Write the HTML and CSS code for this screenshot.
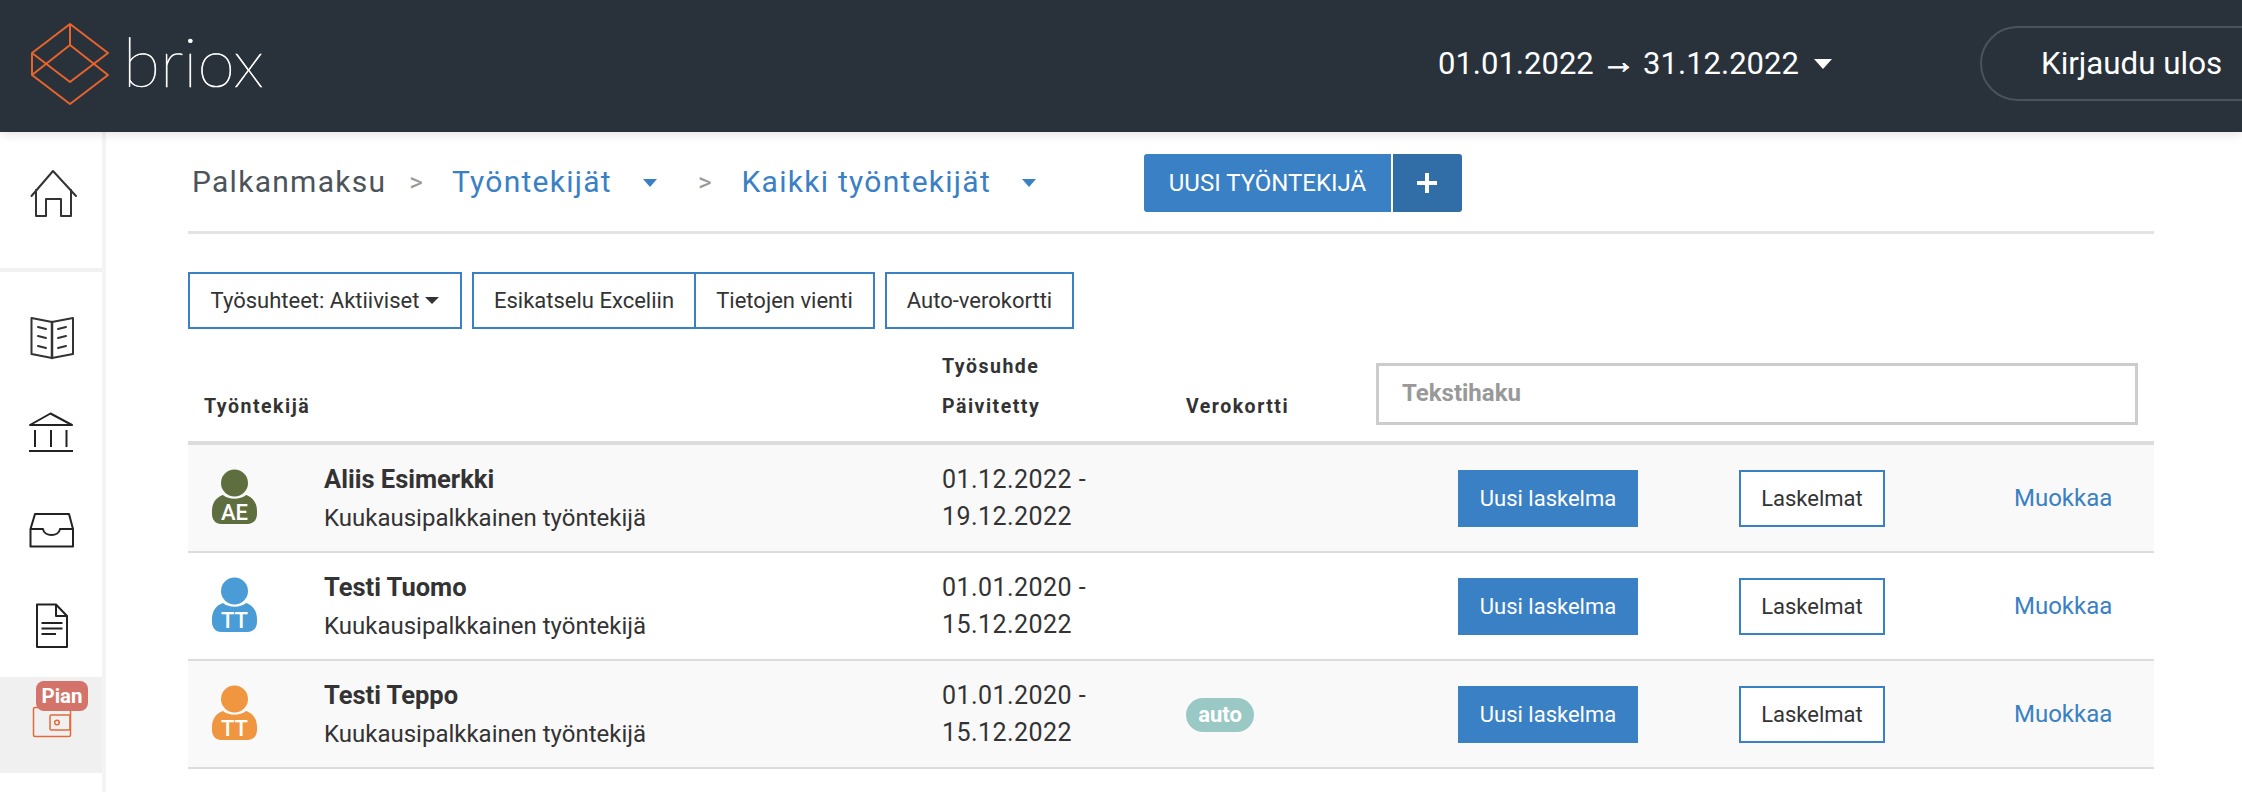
FILE: index.html
```html
<!DOCTYPE html>
<html lang="fi">
<head>
<meta charset="utf-8">
<title>Briox – Työntekijät</title>
<link rel="stylesheet" href="styles.css">
</head>
<body>
<header class="topbar">
  <a class="logo">
    <svg class="logo-mark" viewBox="0 0 130 132" width="130" height="132" fill="none" stroke="#e8642c" stroke-width="2" stroke-linejoin="round">
      <path d="M70 24L108 53L70 82L32 53Z"/>
      <path d="M70 24V45L108 75L70 104L32 75V53"/>
      <path d="M70 45L32 75"/>
    </svg>
    <span class="logo-text">briox</span>
  </a>
  <div class="period">01.01.2022 <span class="arrow">→</span> 31.12.2022<span class="caret caret-white"></span></div>
  <a class="logout">Kirjaudu ulos</a>
</header>
<div class="layout">
  <nav class="sidebar">
    <div class="side-home">
      <svg viewBox="0 132 102 136" width="102" height="136" fill="none" stroke="#333" stroke-width="2" stroke-linejoin="round" stroke-linecap="round">
        <path d="M31.500 196L53 171L76 196"/>
        <path d="M36 190V216H46V199H61V216H71V190"/>
      </svg>
    </div>
    <div class="side-list">
      <div class="side-item">
        <svg viewBox="0 290 102 96" width="102" height="96" fill="none" stroke="#333" stroke-width="2" stroke-linejoin="round" stroke-linecap="round">
          <path d="M31.500 318L52 322L73 318V354L52 358L31.500 354Z"/>
          <path d="M52 322V358" stroke-width="2.500"/>
          <path d="M38 327L46 329M38 336L46 338M38 346L46 348M58 329L66 327M58 338L66 336M58 348L66 346"/>
        </svg>
      </div>
      <div class="side-item">
        <svg viewBox="0 386 102 96" width="102" height="96" fill="none" stroke="#222" stroke-width="2" stroke-linejoin="round">
          <path d="M30 425L50.500 413.500L72 425Z"/>
          <path d="M35 430V447M51 430V447M66.500 430V447"/>
          <path d="M29 451H73"/>
        </svg>
      </div>
      <div class="side-item">
        <svg viewBox="0 482 102 96" width="102" height="96" fill="none" stroke="#222" stroke-width="2" stroke-linejoin="round">
          <path d="M30.500 529L35 514H69L73 529V546.500H30.500Z"/>
          <path d="M30.500 529H43C44 537 59 537 60 529H73"/>
        </svg>
      </div>
      <div class="side-item">
        <svg viewBox="0 578 102 96" width="102" height="96" fill="none" stroke="#222" stroke-width="2" stroke-linejoin="round">
          <path d="M37 604.500H56L67 616V647H37Z"/>
          <path d="M56 604.500V616H67"/>
          <path d="M41.500 623H62.500M41.500 628.500H62.500M41.500 634H56"/>
        </svg>
      </div>
    </div>
    <div class="side-soon">
      <svg viewBox="0 677 102 96" width="102" height="96" fill="none" stroke="#e2693a" stroke-width="1.500" stroke-linejoin="round">
        <rect x="33.500" y="707.500" width="37" height="29" rx="1.500"/>
        <rect x="50" y="715" width="20" height="15" rx="1"/>
        <circle cx="57" cy="722.500" r="2.300"/>
      </svg>
      <span class="soon-badge">Pian</span>
    </div>
  </nav>
  <main class="main">
    <div class="crumbs">
      <span class="crumb crumb-root">Palkanmaksu</span>
      <span class="crumb-sep sep-1">&gt;</span>
      <a class="crumb crumb-link">Työntekijät</a>
      <span class="caret caret-blue caret-1"></span>
      <span class="crumb-sep sep-2">&gt;</span>
      <a class="crumb crumb-link">Kaikki työntekijät</a>
      <span class="caret caret-blue caret-2"></span>
      <div class="new-group">
        <a class="new-main">UUSI TYÖNTEKIJÄ</a>
        <a class="new-plus">
          <svg viewBox="0 0 20 20" width="20" height="20" fill="#fff"><path d="M8 0H12V8H20V12H12V20H8V12H0V8H8Z"/></svg>
        </a>
      </div>
    </div>
    <div class="toolbar">
      <a class="tool tool-filter">Työsuhteet: Aktiiviset<span class="caret caret-dark"></span></a>
      <div class="tool-group">
        <a class="tool tool-excel">Esikatselu Exceliin</a>
        <a class="tool tool-export">Tietojen vienti</a>
      </div>
      <a class="tool tool-auto">Auto-verokortti</a>
    </div>
    <div class="table-head">
      <div class="th">Työntekijä</div>
      <div class="th">Työsuhde<br>Päivitetty</div>
      <div class="th">Verokortti</div>
      <input class="search" type="text" placeholder="Tekstihaku">
    </div>
    <div class="rows">
      <div class="row row-odd">
        <svg class="avatar avatar-olive" viewBox="0 0 45 58" width="45" height="58">
          <circle cx="22.500" cy="14" r="13.500"/>
          <path d="M0 42C0 33 5 28 11 26C17 31 28 31 34 26C40 28 45 33 45 42V45C45 51 41 55 36 55H9C4 55 0 51 0 45Z"/>
          <text x="22.500" y="51" text-anchor="middle">AE</text>
        </svg>
        <div class="person"><div class="name">Aliis Esimerkki</div><div class="role">Kuukausipalkkainen työntekijä</div></div>
        <div class="dates">01.12.2022 -<br>19.12.2022</div>
        <div class="tax"></div>
        <a class="calc-new">Uusi laskelma</a>
        <a class="calc-list">Laskelmat</a>
        <a class="edit">Muokkaa</a>
      </div>
      <div class="row">
        <svg class="avatar avatar-blue" viewBox="0 0 45 58" width="45" height="58">
          <circle cx="22.500" cy="14" r="13.500"/>
          <path d="M0 42C0 33 5 28 11 26C17 31 28 31 34 26C40 28 45 33 45 42V45C45 51 41 55 36 55H9C4 55 0 51 0 45Z"/>
          <text x="22.500" y="51" text-anchor="middle">TT</text>
        </svg>
        <div class="person"><div class="name">Testi Tuomo</div><div class="role">Kuukausipalkkainen työntekijä</div></div>
        <div class="dates">01.01.2020 -<br>15.12.2022</div>
        <div class="tax"></div>
        <a class="calc-new">Uusi laskelma</a>
        <a class="calc-list">Laskelmat</a>
        <a class="edit">Muokkaa</a>
      </div>
      <div class="row row-odd">
        <svg class="avatar avatar-orange" viewBox="0 0 45 58" width="45" height="58">
          <circle cx="22.500" cy="14" r="13.500"/>
          <path d="M0 42C0 33 5 28 11 26C17 31 28 31 34 26C40 28 45 33 45 42V45C45 51 41 55 36 55H9C4 55 0 51 0 45Z"/>
          <text x="22.500" y="51" text-anchor="middle">TT</text>
        </svg>
        <div class="person"><div class="name">Testi Teppo</div><div class="role">Kuukausipalkkainen työntekijä</div></div>
        <div class="dates">01.01.2020 -<br>15.12.2022</div>
        <div class="tax"><span class="auto-badge">auto</span></div>
        <a class="calc-new">Uusi laskelma</a>
        <a class="calc-list">Laskelmat</a>
        <a class="edit">Muokkaa</a>
      </div>
    </div>
  </main>
</div>
</body>
</html>
```
FILE: styles.css
```css
* { box-sizing: border-box; }
html, body { margin: 0; height: 100%; overflow: hidden; }
body { font-family: Roboto, "Liberation Sans", sans-serif; color: #333; background: #fff; width: 2242px; height: 792px; }
svg { display: block; }

.topbar { height: 132px; background: #29323a; display: flex; align-items: center; position: relative; z-index: 2; box-shadow: 0 2px 10px rgba(0,0,0,.12); overflow: hidden; }
.logo { display: flex; align-items: center; width: 1438px; flex: none; }
.logo-mark { margin-right: -4px; flex: none; }
.logo-text { font-family: Lato, sans-serif; font-weight: 100; font-size: 68px; line-height: 122px; color: #fff; -webkit-text-stroke: .7px #fff; letter-spacing: 0; margin: 0 0 10px -3px; }
.period { flex: none; width: 542px; color: #fff; font-size: 31px; display: flex; align-items: center; white-space: pre; margin-bottom: 5px; }
.arrow { font-weight: 700; font-size: 34px; line-height: 36px; margin-bottom: 6px; -webkit-text-stroke: .8px #fff; }
.caret { display: inline-block; width: 0; height: 0; border-style: solid; border-color: transparent; border-bottom-width: 0; }
.caret-white { border-width: 10px 9.500px 0; border-top-color: #fff; margin-left: 15px; }
.logout { flex: none; width: 400px; height: 75px; border: 2px solid #4b535a; border-radius: 38px; color: #fff; font-size: 31.300px; line-height: 71px; padding-left: 59px; white-space: nowrap; margin-bottom: 5px; }

.layout { display: flex; height: 660px; }
.sidebar { width: 102px; flex: none; background: #fff; }
.side-home { height: 136px; }
.side-list { margin-top: 4px; padding-top: 18px; box-shadow: 0 -4px 0 #f1f1f1; height: 405px; }
.side-item { height: 96px; }
.side-soon { height: 96px; background: #f0f0f0; position: relative; }
.soon-badge { position: absolute; left: 36px; top: 4px; width: 52px; height: 30px; background: #d4736a; border-radius: 8px; color: #fff; font-weight: 700; font-size: 20.500px; line-height: 30px; text-align: center; }

.main { flex: 1; padding: 0 88px 0 82px; border-left: 4px solid #f4f4f4; min-width: 0; }
.crumbs { height: 102px; border-bottom: 3px solid #e3e3e3; display: flex; align-items: center; padding-left: 4px; }
.crumb { font-size: 30px; letter-spacing: 1.270px; line-height: 40px; white-space: nowrap; }
.crumb-root { color: #4c545b; }
.crumb-link { color: #3a80c4; }
.crumb-sep { font-size: 26px; color: #999; }
.sep-1 { margin: 0 29px 0 23px; }
.sep-2 { margin: 0 30px 0 41px; }
.caret-blue { border-width: 8px 7.500px 0; border-top-color: #3a80c4; margin-top: 3px; }
.caret-1 { margin-left: 31px; }
.caret-2 { margin-left: 31px; }
.new-group { display: flex; height: 58px; margin: 3px 0 0 108px; border-radius: 3px; overflow: hidden; }
.new-main { width: 247px; background: #3a80c4; color: #fff; font-size: 24px; line-height: 58px; text-align: center; white-space: nowrap; }
.new-plus { width: 69px; margin-left: 2px; background: #316da6; display: flex; align-items: center; justify-content: center; }

.toolbar { display: flex; margin-top: 38px; gap: 10px; }
.tool { display: flex; align-items: center; justify-content: center; height: 57px; border: 2px solid #3a80c4; font-size: 22px; color: #333; white-space: nowrap; }
.tool-filter { width: 274px; }
.caret-dark { border-width: 7px 7.500px 0; border-top-color: #333; margin-left: 6px; }
.tool-group { display: flex; width: 403px; }
.tool-excel { width: 224px; }
.tool-export { flex: 1; border-left: 0; }
.tool-auto { width: 189px; }

.table-head { height: 112px; display: grid; grid-template-columns: 754px 244px 190px 762px; align-items: end; padding-bottom: 16px; }
.th { font-size: 19.500px; font-weight: 700; letter-spacing: 1.500px; line-height: 40px; color: #333; margin-bottom: -2px; }
.th:first-child { padding-left: 16px; }
.search { height: 62px; width: 762px; border: 3px solid #ccc; padding: 0 23px 2px; font: 700 24px Roboto, sans-serif; color: #333; outline: none; background: #fff; }
.search::placeholder { color: #999; opacity: 1; }

.rows { border-top: 4px solid #dcdcdc; }
.row { height: 108px; border-bottom: 2px solid #dcdcdc; display: grid; grid-template-columns: 136px 618px 244px 272px 281px 275px 140px; align-items: center; }
.row-odd { background: #f9f9f9; }
.avatar { margin-left: 24px; }
.avatar text { font: 500 22px Roboto, sans-serif; fill: #fff; }
.avatar-olive { fill: #5f6e3f; }
.avatar-blue { fill: #4a9cd6; }
.avatar-orange { fill: #f19640; }
.name { font-size: 25.500px; font-weight: 700; line-height: 38px; color: #333; margin-bottom: 2px; }
.role { font-size: 24px; line-height: 36px; color: #333; }
.dates { font-size: 25px; line-height: 37px; letter-spacing: .45px; color: #333; }
.tax { display: flex; align-items: center; padding-top: 2px; }
.auto-badge { display: block; width: 68px; height: 34px; border-radius: 17px; background: #9ac8c4; color: #fff; font-size: 22px; font-weight: 700; line-height: 34px; text-align: center; }
.calc-new { width: 180px; height: 57px; background: #3a80c4; color: #fff; font-size: 22px; line-height: 57px; text-align: center; white-space: nowrap; }
.calc-list { width: 146px; height: 57px; border: 2px solid #3a80c4; background: #fff; color: #333; font-size: 22px; line-height: 53px; text-align: center; }
.edit { color: #3a80c4; font-size: 24px; }
```
